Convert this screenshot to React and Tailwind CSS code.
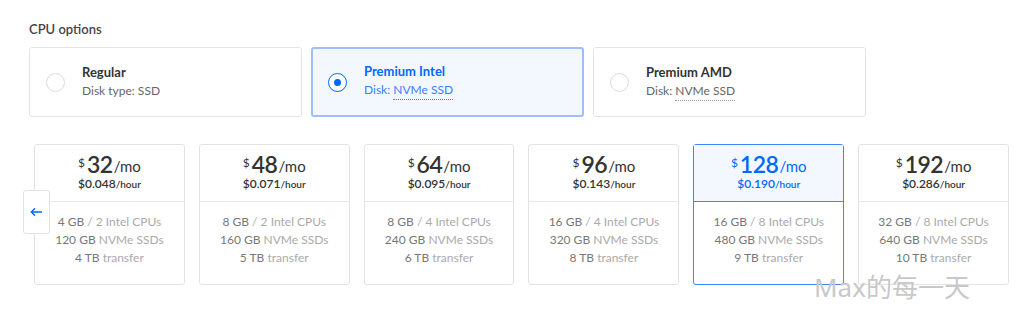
import React from "react";

const plans = [
  { p: "32", h: "0.048", ram: "4 GB", cpu: "2 Intel CPUs", ssd: "120 GB", tb: "4 TB" },
  { p: "48", h: "0.071", ram: "8 GB", cpu: "2 Intel CPUs", ssd: "160 GB", tb: "5 TB" },
  { p: "64", h: "0.095", ram: "8 GB", cpu: "4 Intel CPUs", ssd: "240 GB", tb: "6 TB" },
  { p: "96", h: "0.143", ram: "16 GB", cpu: "4 Intel CPUs", ssd: "320 GB", tb: "8 TB" },
  { p: "128", h: "0.190", ram: "16 GB", cpu: "8 Intel CPUs", ssd: "480 GB", tb: "9 TB", sel: true },
  { p: "192", h: "0.286", ram: "32 GB", cpu: "8 Intel CPUs", ssd: "640 GB", tb: "10 TB" },
];

function Option({ title, pre, sub, dotted, sel }) {
  return (
    <div
      className={
        "flex items-center h-[70px] rounded-[3px] " +
        (sel ? "border-2 border-[#9cc0ff] bg-[#f3f8ff]" : "border border-[#e5e5e5] bg-white")
      }
    >
      <div className={sel ? "w-[19px] ml-[15px]" : "w-[19px] ml-[16px]"}>
        {sel ? (
          <div className="w-[19px] h-[19px] rounded-full border-[1.5px] border-[#0069ff] flex items-center justify-center bg-white">
            <div className="w-[7px] h-[7px] rounded-full bg-[#0069ff]" />
          </div>
        ) : (
          <div className="w-[19px] h-[19px] rounded-full border border-[#dcdcdc] bg-white" />
        )}
      </div>
      <div className={sel ? "ml-[17px] -mt-[3px]" : "ml-[17px] -mt-[2px]"}>
        <div className={"text-[13px] font-bold leading-[16px] " + (sel ? "text-[#0069ff]" : "text-[#333]")}>{title}</div>
        <div className={"text-[12px] leading-[16px] mt-[3px] " + (sel ? "text-[#3d7dff]" : "text-[#666]")}>
          {pre}
          {dotted ? (
            <span className={"border-b border-dotted pb-[2px] " + (sel ? "border-[#3d7dff]" : "border-[#999]")}>{sub}</span>
          ) : (
            sub
          )}
        </div>
      </div>
    </div>
  );
}

function Plan({ d }) {
  const sel = d.sel;
  const main = sel ? "text-[#0069ff]" : "text-[#333]";
  return (
    <div className={"h-[141px] rounded-[3px] flex flex-col " + (sel ? "border border-[#3d86ff]" : "border border-[#e3e3e3]")}>
      <div className={"h-[57px] flex flex-col items-center pt-[8px] " + (sel ? "bg-[#f3f8ff] border-b border-[#3d86ff]" : "border-b border-[#e8e8e8]")}>
        <div className={"flex items-start leading-none " + main}>
          <span className="text-[12px] mt-[4px] mr-[2px]">$</span>
          <span className="text-[23px] font-semibold leading-[23px] tracking-[-0.5px]">{d.p}</span>
          <span className="text-[15px] mt-[6px] ml-[1px]">/mo</span>
        </div>
        <div className={"leading-[14px] -mt-[1px] " + main}>
          <span className="text-[12px] font-semibold">${d.h}</span>
          <span className="text-[10px] font-semibold">/hour</span>
        </div>
      </div>
      <div className="flex flex-col items-center pt-[11px] text-[12px] leading-[18px] text-[#aaa]">
        <div><span className="text-[#777]">{d.ram}</span> / {d.cpu}</div>
        <div><span className="text-[#777]">{d.ssd}</span> NVMe SSDs</div>
        <div><span className="text-[#777]">{d.tb}</span> transfer</div>
      </div>
    </div>
  );
}

export default function App() {
  return (
    <div
      className="relative w-[1024px] h-[316px] bg-white overflow-hidden"
      style={{ fontFamily: "Lato, 'Noto Sans', sans-serif" }}
    >
      <div className="pl-[29px] pt-[21px] w-[866px]">
        <div className="text-[13px] font-semibold text-[#444] leading-[16px]">CPU options</div>
        <div className="grid grid-cols-3 gap-[9px] mt-[10px]">
          <Option title="Regular" pre="Disk type: SSD" sub="" />
          <Option title="Premium Intel" pre="Disk: " sub="NVMe SSD" dotted sel />
          <Option title="Premium AMD" pre="Disk: " sub="NVMe SSD" dotted />
        </div>
      </div>
      <div className="relative pl-[34px] pr-[15px] mt-[27px]">
        <div className="grid grid-cols-6 gap-[14px]">
          {plans.map((d) => (
            <Plan key={d.p} d={d} />
          ))}
        </div>
        <div className="absolute left-[23px] top-[46px] w-[27px] h-[44px] bg-white border border-[#e3e3e3] rounded-[3px] flex items-center justify-center">
          <svg width="13" height="10" viewBox="0 0 13 10" fill="none" stroke="#0069ff" strokeWidth="1.4">
            <path d="M12 5H1.5M5 1.3L1.3 5L5 8.7" />
          </svg>
        </div>
      </div>
      <div
        className="absolute left-[814px] top-[272px] text-[26px] text-[#c8c8c8] leading-[30px]"
        style={{ fontFamily: "'Noto Sans', 'Noto Sans CJK SC', sans-serif" }}
      >
        Max的每一天
      </div>
    </div>
  );
}
